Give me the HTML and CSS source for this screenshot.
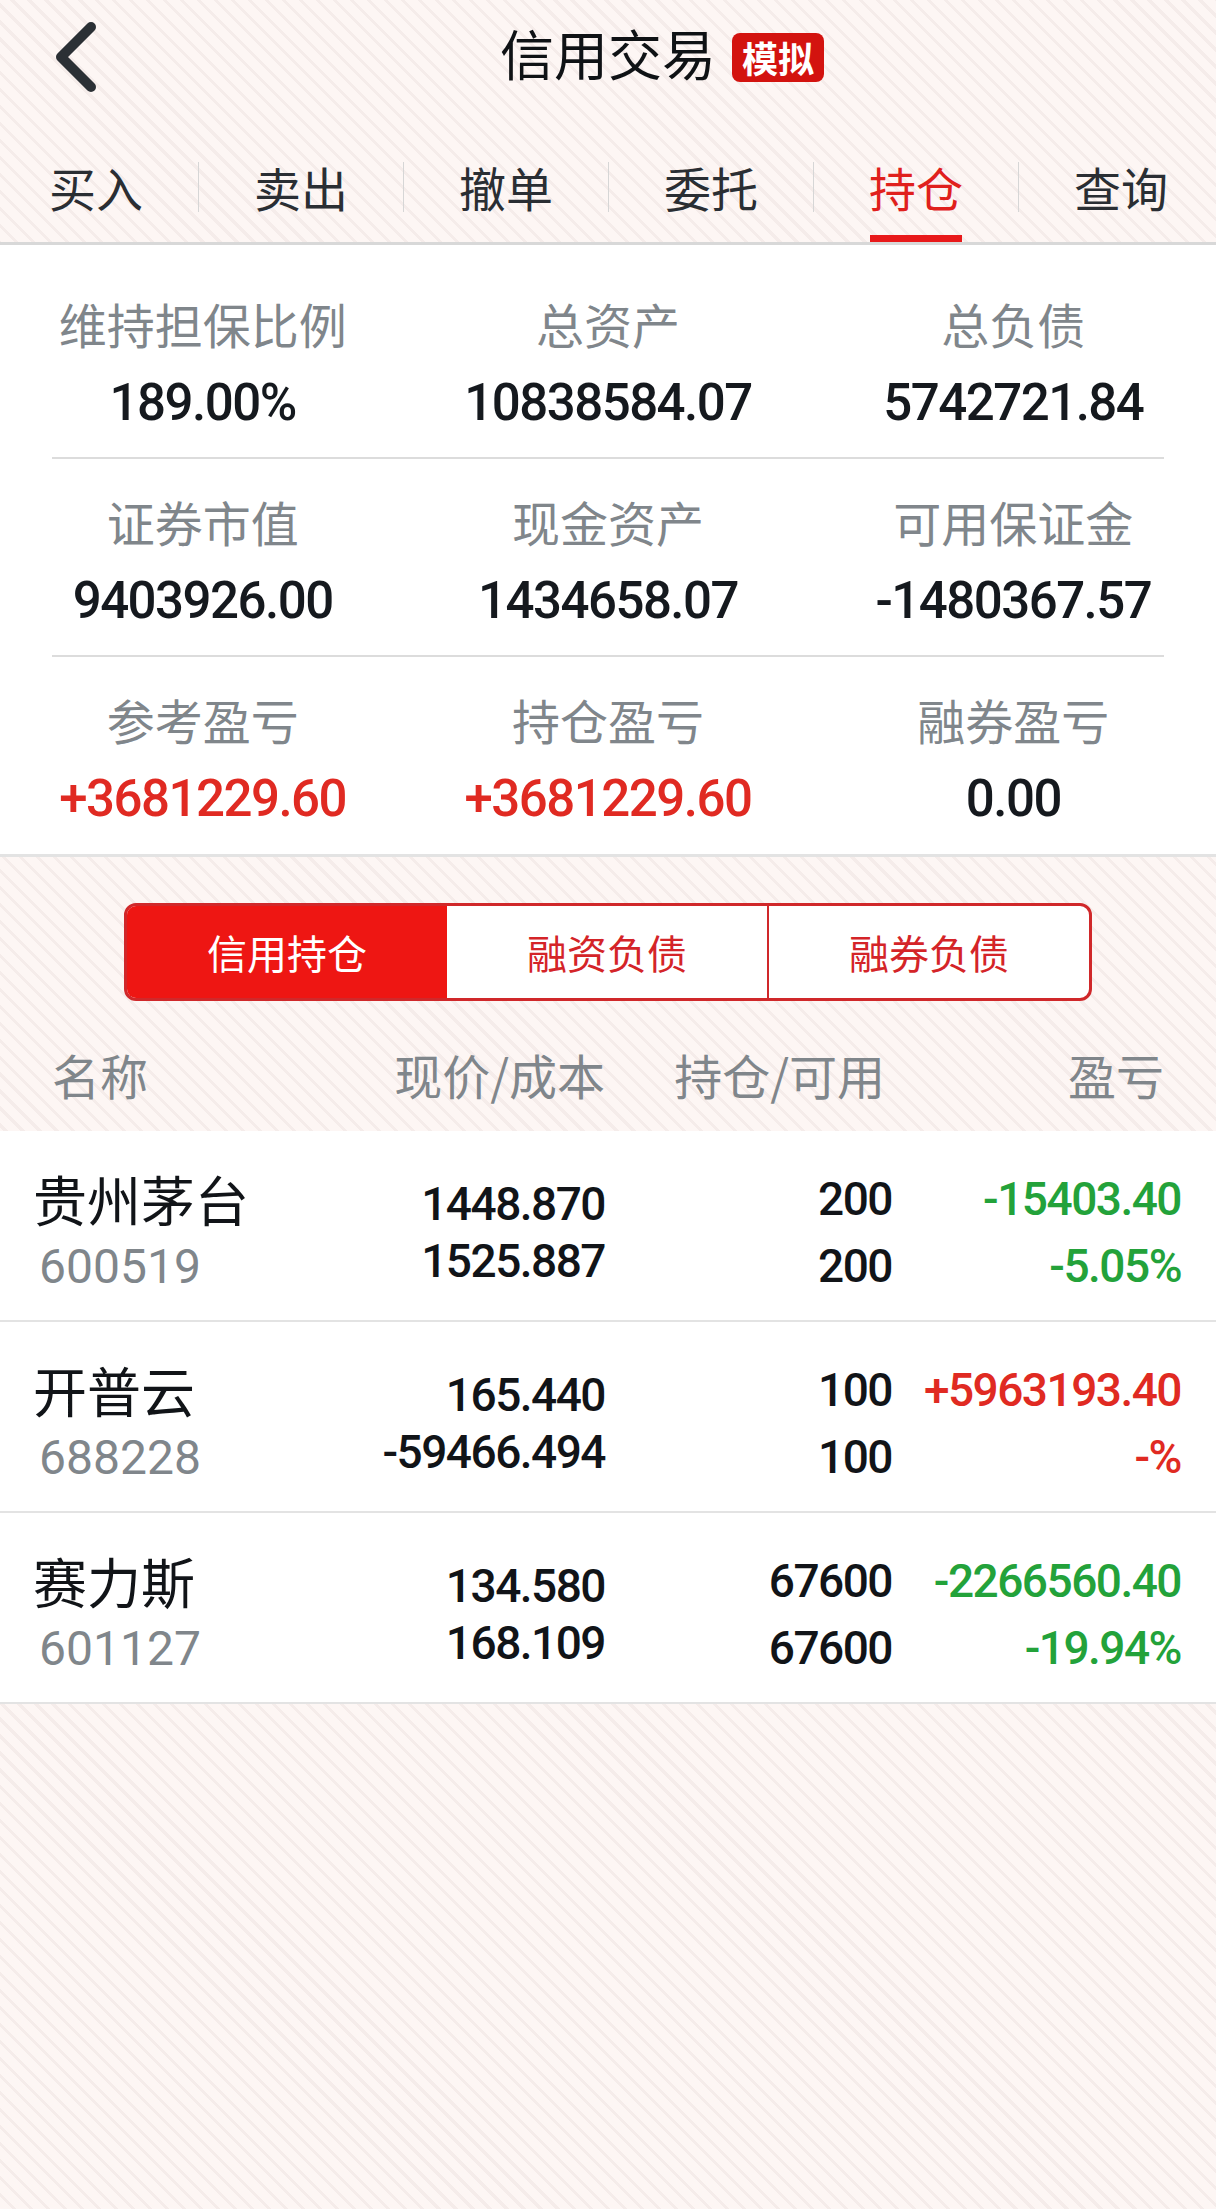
FILE: index.html
```html
<!DOCTYPE html>
<html lang="zh-CN">
<head>
    <meta charset="UTF-8">
    <meta name="viewport" content="width=device-width, initial-scale=1.0">
    <title>信用交易</title>
    <link rel="stylesheet" href="styles.css">
</head>
<body>
    <div class="page">
        <header class="top-bar">
            <div class="back">
                <svg class="back-icon" width="60" height="80" viewBox="0 0 60 80">
                    <path d="M45 9 L15 39 L45 69" fill="none" stroke="#2b3035" stroke-width="10" stroke-linecap="round" stroke-linejoin="round"/>
                </svg>
            </div>
            <div class="title">信用交易<span class="badge">模拟</span></div>
            <div></div>
        </header>

        <nav class="tabs">
            <div class="tab"><div class="tab-text">买入</div><div class="tab-line"></div></div>
            <div class="tab"><div class="tab-text">卖出</div><div class="tab-line"></div></div>
            <div class="tab"><div class="tab-text">撤单</div><div class="tab-line"></div></div>
            <div class="tab"><div class="tab-text">委托</div><div class="tab-line"></div></div>
            <div class="tab active"><div class="tab-text">持仓</div><div class="tab-line"></div></div>
            <div class="tab"><div class="tab-text">查询</div><div class="tab-line"></div></div>
        </nav>

        <section class="summary">
            <div class="summary-row">
                <div class="cell"><div class="label">维持担保比例</div><div class="value">189.00%</div></div>
                <div class="cell"><div class="label">总资产</div><div class="value">10838584.07</div></div>
                <div class="cell"><div class="label">总负债</div><div class="value">5742721.84</div></div>
            </div>
            <div class="divider"></div>
            <div class="summary-row">
                <div class="cell"><div class="label">证券市值</div><div class="value">9403926.00</div></div>
                <div class="cell"><div class="label">现金资产</div><div class="value">1434658.07</div></div>
                <div class="cell"><div class="label">可用保证金</div><div class="value">-1480367.57</div></div>
            </div>
            <div class="divider"></div>
            <div class="summary-row">
                <div class="cell"><div class="label">参考盈亏</div><div class="value up">+3681229.60</div></div>
                <div class="cell"><div class="label">持仓盈亏</div><div class="value up">+3681229.60</div></div>
                <div class="cell"><div class="label">融券盈亏</div><div class="value">0.00</div></div>
            </div>
        </section>

        <section class="positions">
            <div class="segment">
                <div class="seg active">信用持仓</div>
                <div class="seg">融资负债</div>
                <div class="seg">融券负债</div>
            </div>

            <div class="list-head">
                <div class="h-name">名称</div>
                <div class="h-price">现价/成本</div>
                <div class="h-qty">持仓/可用</div>
                <div class="h-pl">盈亏</div>
            </div>

            <div class="stock-list">
                <div class="stock-row">
                    <div class="name-col"><div class="name">贵州茅台</div><div class="code">600519</div></div>
                    <div class="price-col"><div>1448.870</div><div>1525.887</div></div>
                    <div class="qty-col"><div>200</div><div>200</div></div>
                    <div class="pl-col down"><div>-15403.40</div><div>-5.05%</div></div>
                </div>
                <div class="stock-row">
                    <div class="name-col"><div class="name">开普云</div><div class="code">688228</div></div>
                    <div class="price-col"><div>165.440</div><div>-59466.494</div></div>
                    <div class="qty-col"><div>100</div><div>100</div></div>
                    <div class="pl-col up"><div>+5963193.40</div><div>-%</div></div>
                </div>
                <div class="stock-row">
                    <div class="name-col"><div class="name">赛力斯</div><div class="code">601127</div></div>
                    <div class="price-col"><div>134.580</div><div>168.109</div></div>
                    <div class="qty-col"><div>67600</div><div>67600</div></div>
                    <div class="pl-col down"><div>-2266560.40</div><div>-19.94%</div></div>
                </div>
            </div>
        </section>
    </div>
</body>
</html>
```

FILE: styles.css
```css
body {
    margin: 0;
    font-family: "Noto Sans CJK SC", sans-serif;
    background: repeating-linear-gradient(45deg, #fdf6f4 0 9px, #f5ecea 9px 12px);
    overflow-x: hidden;
}
.page {
    width: 1216px;
    min-height: 2209px;
}

/* top bar */
.top-bar {
    display: grid;
    grid-template-columns: 1fr auto 1fr;
    height: 115px;
}
.back {
    display: flex;
    align-items: center;
    padding-left: 46px;
}
.back-icon {
    display: block;
}
.title {
    position: relative;
    font-size: 54px;
    line-height: 106px;
    color: #0f1215;
}
.badge {
    position: absolute;
    top: 33px;
    left: calc(100% + 16px);
    height: 49px;
    padding: 0 10px;
    border-radius: 8px;
    background: #d3130f;
    color: #fff;
    font-size: 36px;
    font-weight: 700;
    line-height: 49px;
    white-space: nowrap;
}

/* tabs */
.tabs {
    display: flex;
    margin-left: -7px;
    border-bottom: 3px solid #d8d8d8;
}
.tab {
    width: 205px;
    flex-shrink: 0;
    display: flex;
    flex-direction: column;
    align-items: center;
}
.tab-text {
    width: 100%;
    height: 50px;
    margin-top: 47px;
    font-size: 47px;
    line-height: 50px;
    text-align: center;
    color: #2a2e33;
    border-left: 1px solid #d6d6d6;
}
.tab:first-child .tab-text {
    border-left-color: transparent;
}
.tab-line {
    width: 92px;
    height: 7px;
    margin-top: 23px;
}
.tab.active .tab-text {
    color: #e0201c;
}
.tab.active .tab-line {
    background: #e8191a;
}

/* summary */
.summary {
    background: #fff;
    padding: 16px 0 1px;
    border-bottom: 3px solid #e3e3e3;
}
.summary-row {
    display: grid;
    grid-template-columns: 1fr 1fr 1fr;
    padding: 32px 0 24px;
}
.cell {
    text-align: center;
}
.label {
    font-size: 48px;
    line-height: 60px;
    color: #80868b;
}
.value {
    margin-top: 20px;
    font-family: Roboto, "Noto Sans CJK SC", sans-serif;
    font-size: 51px;
    font-weight: 500;
    line-height: 60px;
    letter-spacing: -1.5px;
    color: #15191e;
}
.divider {
    height: 2px;
    margin: 0 52px;
    background: #dcdcdc;
}
.up {
    color: #e02a22;
}
.down {
    color: #23a23a;
}

/* positions */
.positions {
    padding-top: 46px;
}
.segment {
    display: flex;
    width: 968px;
    height: 98px;
    margin: 0 auto;
    box-sizing: border-box;
    border: 3px solid #d0282a;
    border-radius: 12px;
    overflow: hidden;
    background: #fff;
}
.seg {
    flex: 1;
    font-size: 40px;
    line-height: 92px;
    text-align: center;
    color: #d42428;
}
.seg + .seg {
    border-left: 2px solid #d0282a;
}
.seg.active {
    background: #ee1613;
    color: #fff;
}
.seg.active + .seg {
    border-left: none;
}

.list-head,
.stock-row {
    display: grid;
    grid-template-columns: 300px 272px 287px 289px;
    padding: 0 35px 0 33px;
}
.list-head {
    margin-top: 40px;
    padding-bottom: 24px;
    font-size: 48px;
    line-height: 66px;
    color: #80868b;
}
.h-name {
    padding-left: 19px;
}
.h-price {
    text-align: right;
}
.h-qty {
    text-align: right;
    padding-right: 7px;
}
.h-pl {
    text-align: right;
    padding-right: 17px;
}

.stock-list {
    background: #fff;
}
.stock-row {
    height: 191px;
    box-sizing: border-box;
    padding-top: 14px;
    align-items: center;
    border-bottom: 2px solid #e3e3e3;
}
.name {
    font-size: 54px;
    line-height: 68px;
    color: #111418;
}
.code {
    padding-left: 6px;
    font-family: Roboto, sans-serif;
    font-size: 48px;
    line-height: 68px;
    color: #80868b;
}
.price-col,
.qty-col,
.pl-col {
    font-family: Roboto, sans-serif;
    font-size: 46px;
    font-weight: 500;
    letter-spacing: -1.5px;
    text-align: right;
}
.price-col {
    line-height: 57px;
    color: #111418;
}
.qty-col {
    line-height: 67px;
    color: #111418;
}
.pl-col {
    line-height: 67px;
}
```
